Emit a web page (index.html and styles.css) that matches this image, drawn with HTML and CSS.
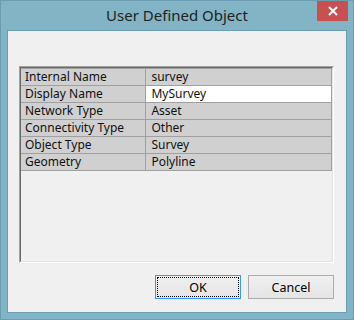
FILE: index.html
```html
<!DOCTYPE html>
<html lang="en">
<head>
    <meta charset="UTF-8">
    <title>User Defined Object</title>
    <link rel="stylesheet" href="styles.css">
</head>
<body>
    <div class="window">
        <div class="titlebar">
            <span class="title">User Defined Object</span>
            <div class="close-btn">
                <svg width="10" height="10" viewBox="0 0 10 10"><path d="M1 1 L9 9 M9 1 L1 9" stroke="#fff" stroke-width="2"/></svg>
            </div>
        </div>
        <div class="client">
            <div class="grid-outer">
                <div class="grid">
                    <table class="props">
                        <tr><td>Internal Name</td><td>survey</td></tr>
                        <tr><td>Display Name</td><td class="editing">MySurvey</td></tr>
                        <tr><td>Network Type</td><td>Asset</td></tr>
                        <tr><td>Connectivity Type</td><td>Other</td></tr>
                        <tr><td>Object Type</td><td>Survey</td></tr>
                        <tr><td>Geometry</td><td>Polyline</td></tr>
                    </table>
                </div>
            </div>
            <div class="buttons">
                <button class="btn btn-default"><span>OK</span></button>
                <button class="btn">Cancel</button>
            </div>
        </div>
    </div>
</body>
</html>
```

FILE: styles.css
```css
body, html { margin: 0; padding: 0; background: #83b4c6; font-family: 'Noto Sans', 'Open Sans', sans-serif; }
.window { width: 354px; height: 320px; box-sizing: border-box; border: 1px solid #6b9caf; background: #83b4c6; padding: 0 6px 6px 6px; display: flex; flex-direction: column; }
.titlebar { height: 29px; display: flex; justify-content: center; align-items: center; position: relative; }
.title { font-size: 15px; color: #222; margin-top: -1px; }
.close-btn { position: absolute; right: -1px; top: 0; width: 31px; height: 20px; background: #c75050; display: flex; align-items: center; justify-content: center; }
.client { flex: 1; border: 1px solid #6b9caf; background: #f0f0f0; display: flex; flex-direction: column; align-items: flex-end; padding: 35px 12px 11px 11px; }
.grid-outer { align-self: stretch; height: 197px; box-sizing: border-box; border: 1px solid; border-color: #a0a0a0 #ffffff #ffffff #a0a0a0; }
.grid { height: 100%; box-sizing: border-box; border: 1px solid; border-color: #696969 #e3e3e3 #e3e3e3 #696969; }
.props { border-collapse: collapse; border-top: 1px solid #a0a0a0; font-size: 12px; color: #111; }
.props td { height: 16px; padding: 0 0 0 4px; background: #d0d0d0; border-right: 1px solid #a0a0a0; border-bottom: 1px solid #a0a0a0; line-height: 16px; white-space: nowrap; box-sizing: border-box; }
.props td:first-child { width: 125px; }
.props td:last-child { width: 186px; padding-left: 5px; }
.props td.editing { background: #ffffff; }
.buttons { display: flex; gap: 7px; margin-top: 12px; }
.btn { width: 86px; height: 24px; box-sizing: border-box; border: 1px solid #acacac; background: linear-gradient(#f0f0f0, #e5e5e5); font-family: inherit; font-size: 12.5px; color: #000; padding: 0; }
.btn-default { border-color: #3399ff; position: relative; }
.btn-default span { position: absolute; left: 1px; top: 1px; right: 1px; bottom: 1px; border: 1px dotted #000; display: flex; align-items: center; justify-content: center; }
```
